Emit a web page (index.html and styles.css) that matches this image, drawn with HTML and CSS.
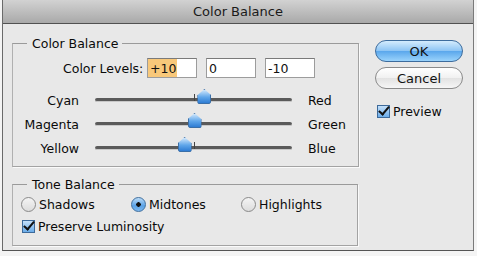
FILE: index.html
```html
<!DOCTYPE html>
<html lang="en">
<head>
  <meta charset="UTF-8">
  <title>Color Balance</title>
  <link rel="stylesheet" href="styles.css">
</head>
<body>
  <div class="window">
    <div class="titlebar">Color Balance</div>
    <div class="content">
      <div class="main">
        <fieldset class="group balance">
          <legend>Color Balance</legend>
          <div class="levels">
            <span class="levels-label">Color Levels:</span>
            <input class="field active" type="text" value="+10">
            <input class="field" type="text" value="0">
            <input class="field" type="text" value="-10">
          </div>

          <div class="sliders">
            <div class="slider-row">
              <span class="left">Cyan</span>
              <div class="track"><span class="tick"></span><span class="thumb" style="left: 55%"></span></div>
              <span class="right">Red</span>
            </div>
            <div class="slider-row">
              <span class="left">Magenta</span>
              <div class="track"><span class="tick"></span><span class="thumb" style="left: 50%"></span></div>
              <span class="right">Green</span>
            </div>
            <div class="slider-row">
              <span class="left">Yellow</span>
              <div class="track"><span class="tick"></span><span class="thumb" style="left: 45%"></span></div>
              <span class="right">Blue</span>
            </div>
          </div>
        </fieldset>

        <fieldset class="group tone">
          <legend>Tone Balance</legend>
          <div class="radios">
            <label class="opt"><span class="radio"></span>Shadows</label>
            <label class="opt"><span class="radio on"></span>Midtones</label>
            <label class="opt"><span class="radio"></span>Highlights</label>
          </div>
          <label class="opt"><span class="check"></span>Preserve Luminosity</label>
        </fieldset>
      </div>

      <div class="side">
        <button class="btn default">OK</button>
        <button class="btn">Cancel</button>
        <label class="opt preview"><span class="check"></span>Preview</label>
      </div>
    </div>
  </div>
</body>
</html>
```

FILE: styles.css
```css
body {
  margin: 0;
  background: #f4f4f4;
  font-family: "DejaVu Sans", sans-serif;
  font-size: 12.5px;
  color: #0a0a0a;
}
.window {
  margin: 0 3px 0 2px;
  height: 250px;
  border-left: 1px solid #6a6a6a;
  border-right: 1px solid #7a7a7a;
  border-bottom: 1px solid #555;
  background: #e8e8e8;
}
.titlebar {
  height: 23px;
  line-height: 24px;
  text-align: center;
  font-size: 13px;
  background: linear-gradient(#d2d2d2, #a9a9a9);
  border-bottom: 1px solid #515151;
  color: #1a1a1a;
}
.content {
  display: flex;
  padding: 12px 0 0 9px;
}
.main {
  width: 346px;
}
.group {
  margin: 0;
  padding: 0;
  border: 1px solid #a3a3a3;
  border-top-color: #9a9a9a;
  border-left-color: #b0b0b0;
  box-shadow: 1px 1px 0 #fafafa;
}
.group legend {
  margin-left: 14px;
  padding: 0 4px 0 5px;
}
.balance {
  height: 129px;
}
.levels {
  display: flex;
  align-items: center;
  margin: 7px 0 0 50px;
}
.levels-label {
  width: 84px;
}
.field {
  width: 44px;
  height: 16px;
  margin-right: 9px;
  padding: 1px 2px;
  border: 1px solid #9c9c9c;
  border-top-color: #7a7a7a;
  background: #fff;
  font-family: inherit;
  font-size: 12.5px;
  color: #111;
}
.field.active {
  background: linear-gradient(90deg, #f8c87a 0, #f8c87a 29px, #fff 29px);
}
.sliders {
  margin-top: 10px;
}
.slider-row {
  display: flex;
  align-items: center;
  height: 24px;
}
.left {
  width: 66px;
  text-align: right;
}
.right {
  width: 50px;
  padding-left: 16px;
}
.track {
  position: relative;
  width: 197px;
  height: 3px;
  margin-left: 16px;
  border-radius: 2px;
  background: #5a5a5a;
  border-bottom: 1px solid #c8c8c8;
}
.tick {
  position: absolute;
  left: 50%;
  top: -4px;
  width: 1px;
  height: 7px;
  background: #444;
}
.thumb {
  position: absolute;
  top: -9px;
  width: 12px;
  height: 13px;
  margin-left: -6px;
  background: linear-gradient(#cfe6fb, #5fa6ea 55%, #2e7cd3);
  border: 1px solid #3a6fa8;
  border-radius: 2px;
  clip-path: polygon(50% 0, 100% 42%, 100% 100%, 0 100%, 0 42%);
}
.tone {
  height: 67px;
  margin-top: 10px;
}
.radios {
  display: flex;
  margin: 5px 0 0 8px;
}
.radios .opt {
  width: 110px;
}
.opt {
  display: flex;
  align-items: center;
}
.tone > .opt {
  margin: 7px 0 0 9px;
}
.radio {
  width: 13px;
  height: 13px;
  margin-right: 3px;
  border: 1px solid #8a8a8a;
  border-radius: 50%;
  background: linear-gradient(#f4f4f4, #dcdcdc);
}
.radio.on {
  background: radial-gradient(circle, #111 0, #111 2px, transparent 2.5px),
              linear-gradient(#bcdcf8, #5aa2e6 60%, #7fb9ee);
  border-color: #3f6f9f;
}
.check {
  position: relative;
  width: 11px;
  height: 11px;
  margin-right: 3px;
  border: 1px solid #3d6a9a;
  background: linear-gradient(#c4e0fa, #6aace9);
}
.check::after {
  content: "";
  position: absolute;
  left: 3px;
  top: -2px;
  width: 4px;
  height: 9px;
  border-right: 2px solid #111;
  border-bottom: 2px solid #111;
  transform: rotate(40deg);
}
.side {
  display: flex;
  flex-direction: column;
  padding: 4px 0 0 17px;
}
.btn {
  width: 88px;
  height: 22px;
  margin-bottom: 5px;
  border: 1px solid #8a8a8a;
  border-radius: 11px;
  background: linear-gradient(#ffffff, #f0f0f0 50%, #e2e2e2 51%, #f6f6f6);
  font-family: inherit;
  font-size: 13px;
  color: #111;
}
.btn.default {
  border-color: #3d6c9d;
  background: linear-gradient(#d4ecfd, #8cc4f4 50%, #5aa7ec 51%, #9ad3fb);
}
.preview {
  margin: 10px 0 0 2px;
}
```
